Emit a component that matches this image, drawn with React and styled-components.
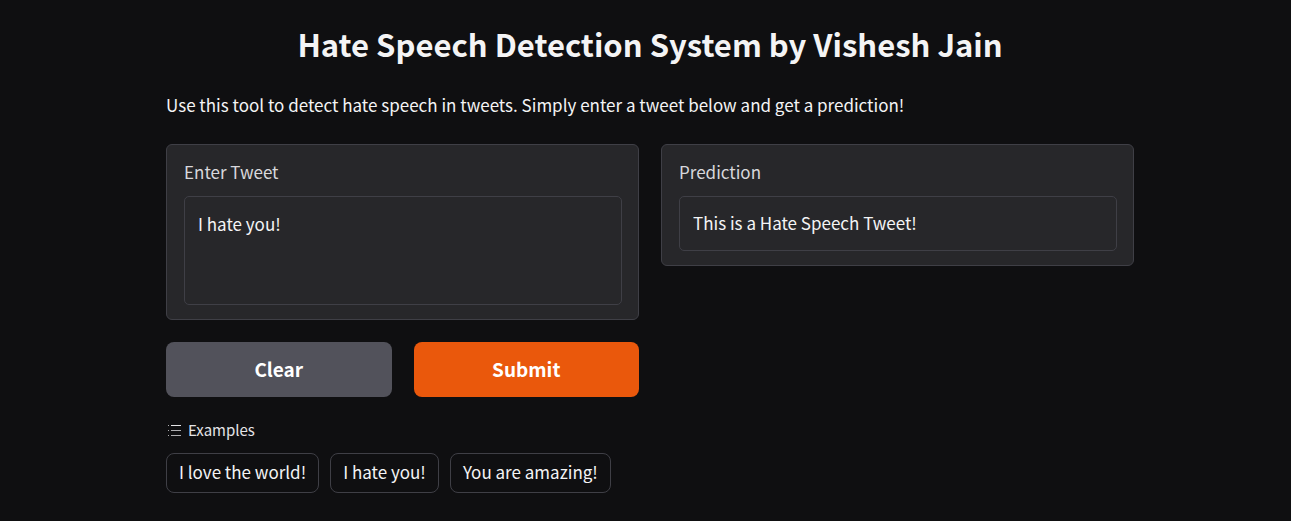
import React, { useState } from "react";
import styled, { createGlobalStyle } from "styled-components";

const GlobalStyle = createGlobalStyle`
  *, *::before, *::after { box-sizing: border-box; }
  body {
    margin: 0;
    background: #0f0f11;
    color: #f4f4f5;
    font-family: "Noto Sans CJK SC", "Noto Sans", sans-serif;
    font-size: 17px;
    line-height: 26px;
  }
  button, textarea, input { font: inherit; color: inherit; }
`;

const Page = styled.main`
  padding: 20px 157px 28px 166px;
`;

const Title = styled.h1`
  margin: 0 0 24px;
  font-size: 31px;
  line-height: 48px;
  font-weight: 700;
  text-align: center;
`;

const Description = styled.p`
  margin: 0 0 26px;
`;

const Columns = styled.div`
  display: grid;
  grid-template-columns: 1fr 1fr;
  align-items: start;
  gap: 22px;
`;

const Column = styled.div`
  display: flex;
  flex-direction: column;
  gap: 22px;
`;

const Panel = styled.div`
  display: flex;
  flex-direction: column;
  gap: 11px;
  padding: 14px 16px 14px 17px;
  border: 1px solid #3f3f46;
  border-radius: 6px;
  background: #27272a;
`;

const Label = styled.label`
  color: #d8d8dc;
`;

const Field = styled.textarea`
  display: block;
  width: 100%;
  height: ${(p) => (p.$tall ? 109 : 55)}px;
  padding: ${(p) => (p.$tall ? "14px 13px" : "12px 13px 14px")};
  border: 1px solid #3f3f46;
  border-radius: 5px;
  outline: none;
  resize: none;
  overflow: hidden;
  background: #27272a;
`;

const Actions = styled.div`
  display: grid;
  grid-template-columns: 1fr 1fr;
  gap: 22px;
`;

const Action = styled.button`
  height: 55px;
  padding: 0 16px 2px;
  border: 0;
  border-radius: 8px;
  background: ${(p) => (p.$primary ? "#ea580c" : "#52525b")};
  color: #ffffff;
  font-size: 19px;
  font-weight: 700;
  cursor: pointer;
`;

const Examples = styled.section`
  margin-top: 21px;
`;

const ExamplesHeading = styled.div`
  display: flex;
  align-items: center;
  gap: 5px;
  margin-bottom: 11px;
  font-size: 15px;
  line-height: 24px;
  color: #e4e4e7;
`;

const ExampleList = styled.div`
  display: flex;
  flex-wrap: wrap;
  gap: 11px;
`;

const Example = styled.button`
  height: 40px;
  padding: 0 12px 2px;
  border: 1px solid #3f3f46;
  border-radius: 8px;
  background: transparent;
  cursor: pointer;
`;

const ListIcon = () => (
  <svg width="17" height="16" viewBox="0 0 17 16" fill="currentColor" aria-hidden="true">
    <path d="M5 3h10v1H5z" />
    <path d="M5 8h10v1H5zM5 13h10v1H5z" opacity="0.75" />
    <path d="M2 3h1v1H2zM2 8h1v1H2zM2 13h1v1H2z" opacity="0.75" />
  </svg>
);

const SAMPLES = ["I love the world!", "I hate you!", "You are amazing!"];

export default function App() {
  const [tweet, setTweet] = useState("I hate you!");
  const [prediction, setPrediction] = useState("This is a Hate Speech Tweet!");

  const clear = () => {
    setTweet("");
    setPrediction("");
  };

  return (
    <>
      <GlobalStyle />
      <Page>
        <Title>Hate Speech Detection System by Vishesh Jain</Title>
        <Description>
          Use this tool to detect hate speech in tweets. Simply enter a tweet below and get a prediction!
        </Description>
        <Columns>
          <Column>
            <Panel>
              <Label htmlFor="tweet">Enter Tweet</Label>
              <Field id="tweet" $tall value={tweet} onChange={(e) => setTweet(e.target.value)} />
            </Panel>
            <Actions>
              <Action type="button" onClick={clear}>Clear</Action>
              <Action type="button" $primary>Submit</Action>
            </Actions>
          </Column>
          <Panel>
            <Label htmlFor="prediction">Prediction</Label>
            <Field as="input" id="prediction" type="text" readOnly value={prediction} />
          </Panel>
        </Columns>
        <Examples>
          <ExamplesHeading>
            <ListIcon />
            Examples
          </ExamplesHeading>
          <ExampleList>
            {SAMPLES.map((s) => (
              <Example type="button" key={s} onClick={() => setTweet(s)}>{s}</Example>
            ))}
          </ExampleList>
        </Examples>
      </Page>
    </>
  );
}
